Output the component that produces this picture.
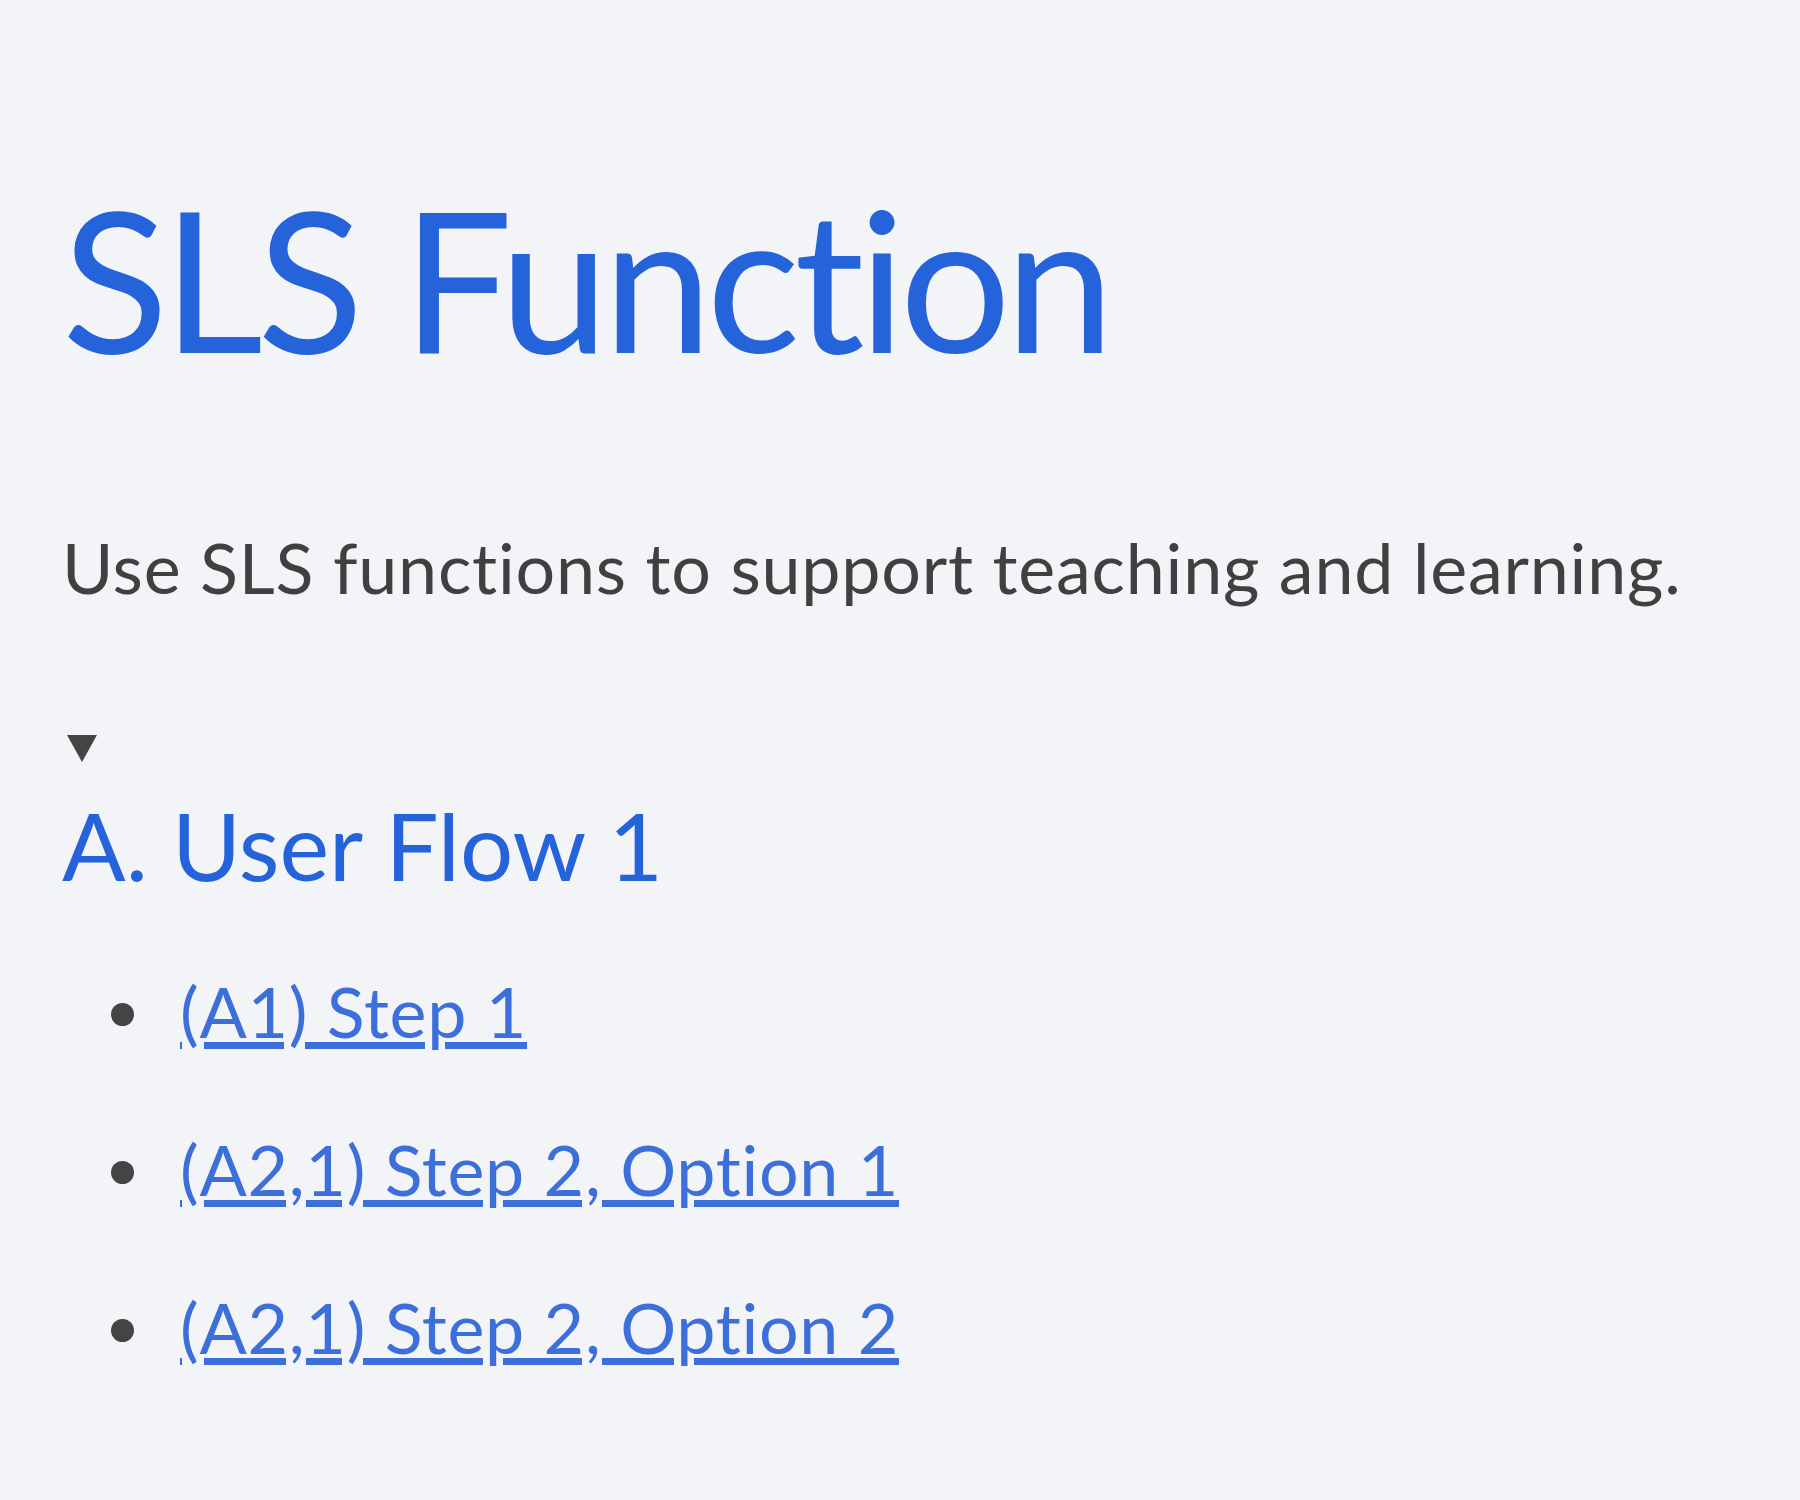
const steps = [
  { label: '(A1) Step 1', href: '#a1' },
  { label: '(A2,1) Step 2, Option 1', href: '#a2-1' },
  { label: '(A2,1) Step 2, Option 2', href: '#a2-2' },
];

export default function App() {
  return (
    <div className="min-h-[1500px] bg-[#f3f4f8] pl-[62px] pt-[160px] font-['Lato',sans-serif] [font-variant-ligatures:none]">
      <h1 className="text-[196px] leading-[1.2] font-normal tracking-[-0.03em] text-[#2563db]">SLS Function</h1>
      <p className="mt-[130px] text-[70px] leading-[1.2] tracking-[0.011em] text-[#404040]">
        Use SLS functions to support teaching and learning.
      </p>
      <div className="mt-[126px]">
        <svg width="30" height="27" viewBox="0 0 30 27" className="ml-[5px]">
          <polygon points="0,0 30,0 15,27" fill="#444" />
        </svg>
        <h2 className="mt-[27px] text-[94px] leading-[1.2] font-normal text-[#2563db]">A. User Flow 1</h2>
        <ul className="mt-[67px] list-disc pl-[102px] text-[70px] leading-[1.2] text-[#444] marker:text-[#444]">
          {steps.map((step) => (
            <li key={step.label} className="mb-[74px] pl-[16px]">
              <a href={step.href} className="tracking-[0.01em] text-[#3d6fdb] underline underline-offset-[4px]">
                {step.label}
              </a>
            </li>
          ))}
        </ul>
      </div>
    </div>
  );
}
